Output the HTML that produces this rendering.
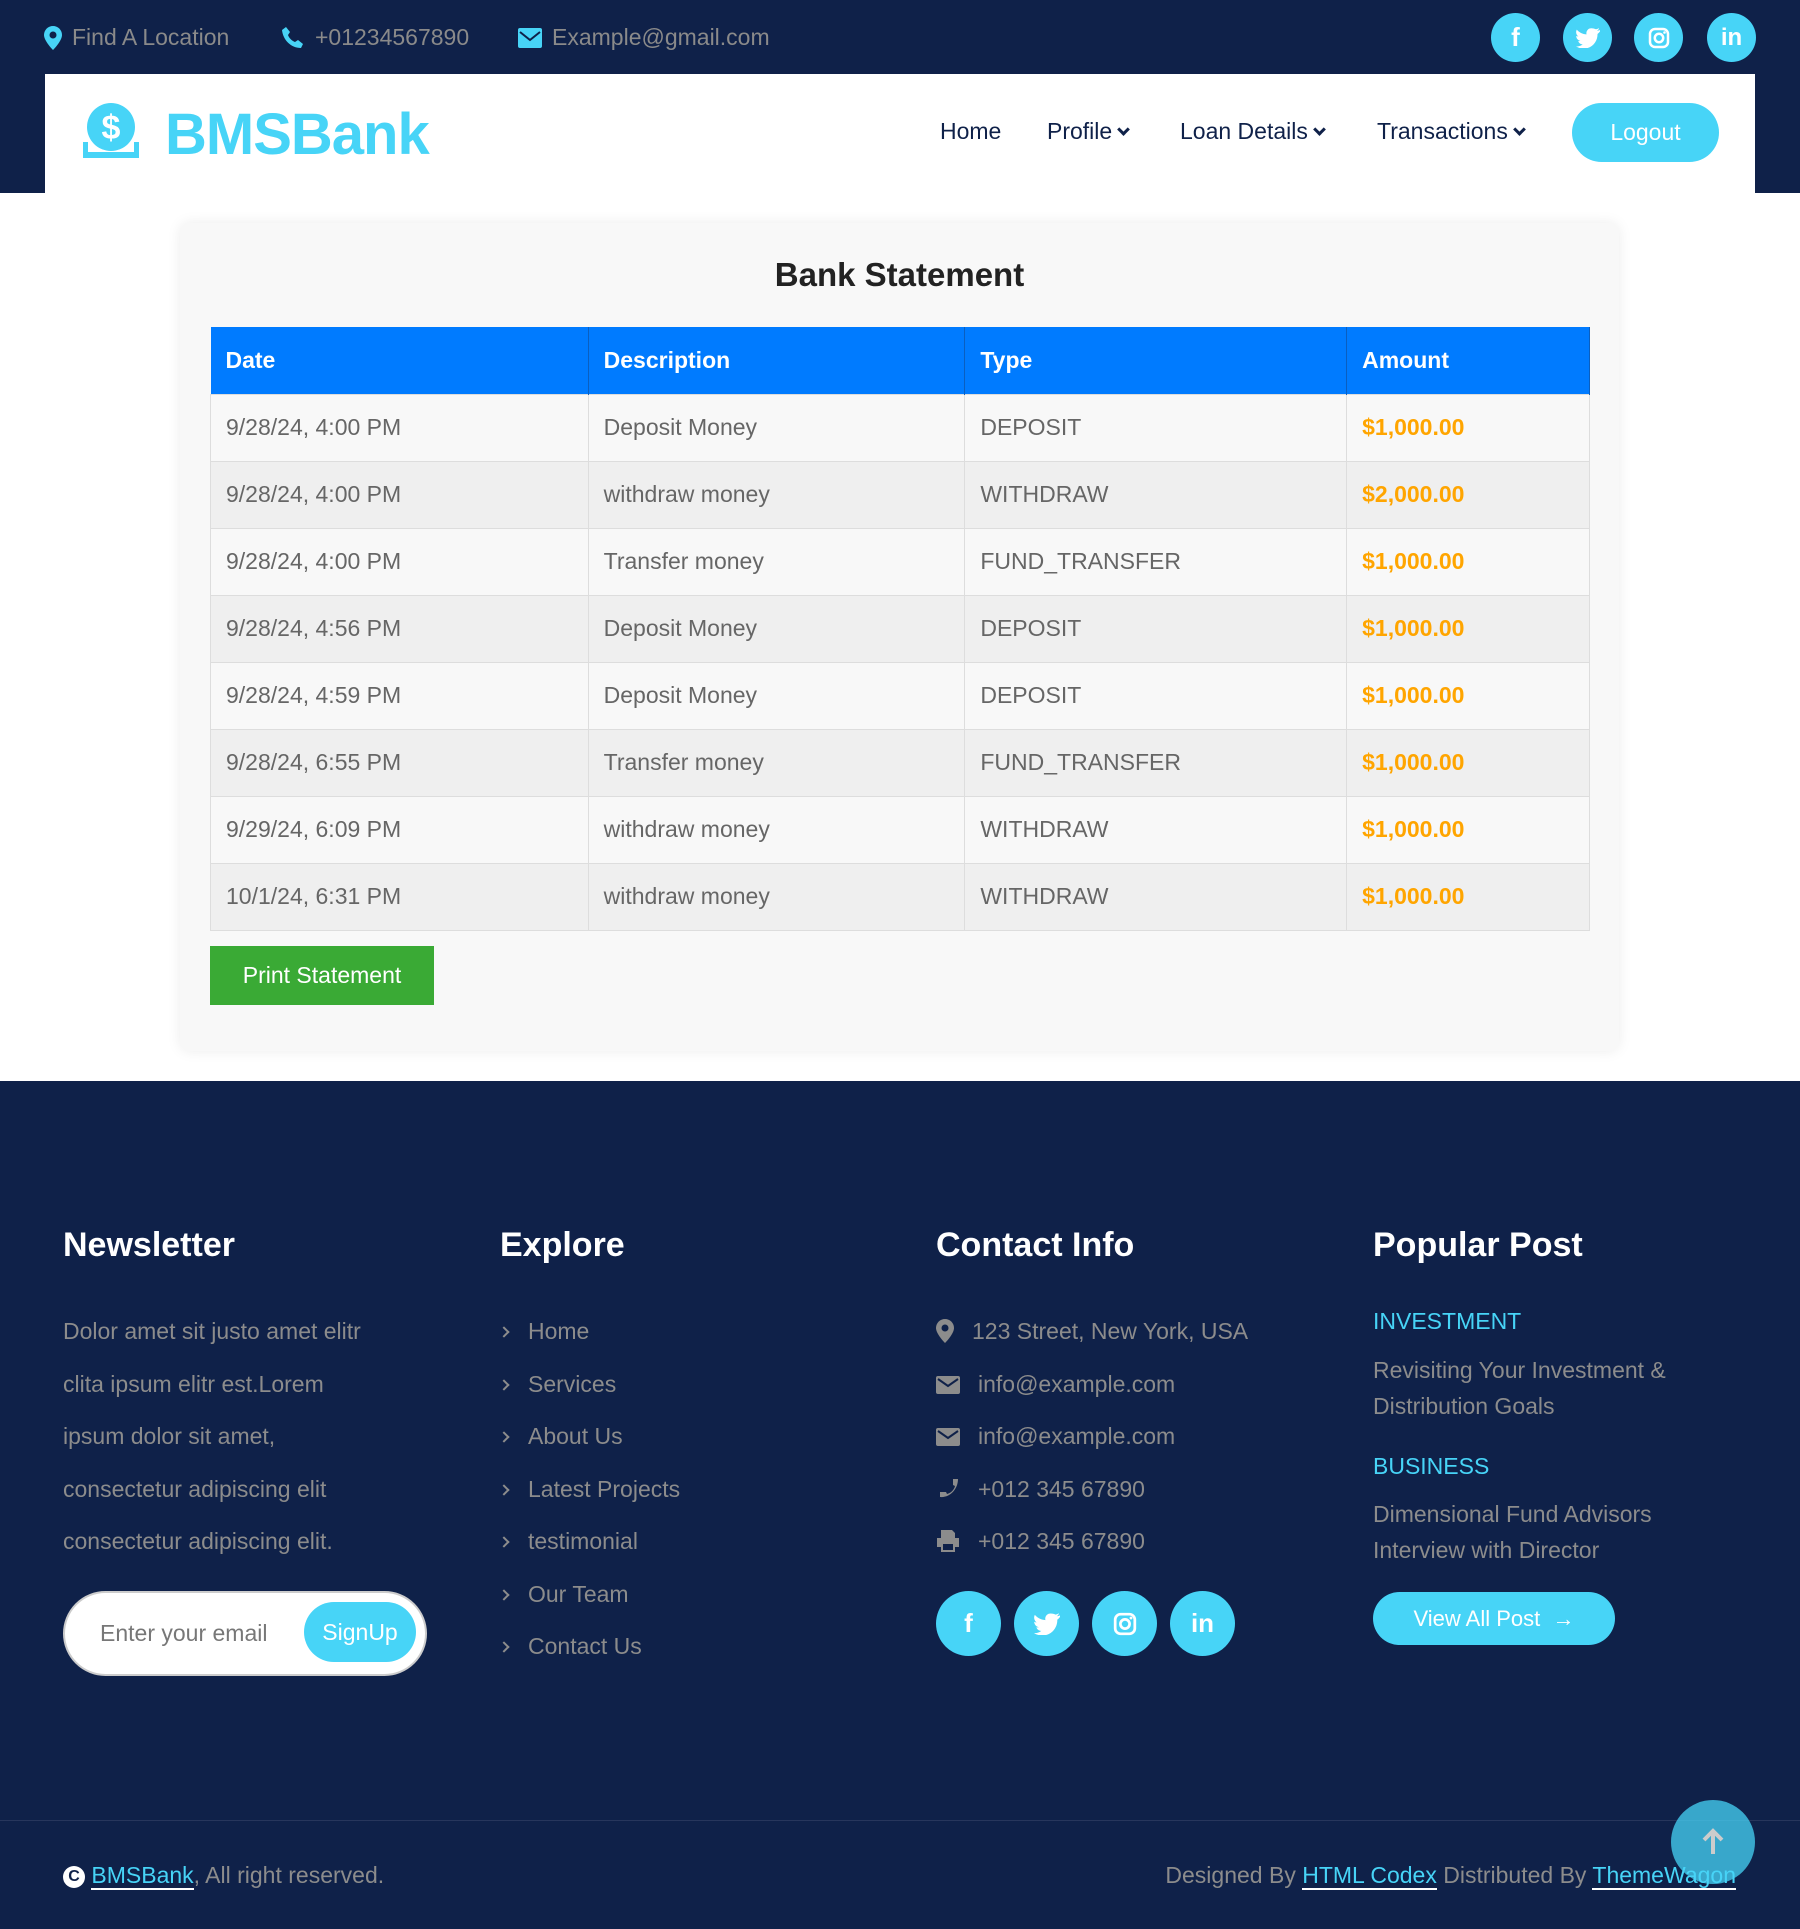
<!DOCTYPE html>
<html><head><meta charset="utf-8">
<style>
*{margin:0;padding:0;box-sizing:border-box}
body{width:1800px;height:1929px;position:relative;font-family:"Liberation Sans",sans-serif;background:#fff;overflow:hidden}
.a{position:absolute}
.navy{background:#0f2149}
.top{color:#8a8a8a;font-size:23px;top:24px;display:flex;align-items:center;gap:10px}
.soc{width:49px;height:49px;border-radius:50%;background:#47d4f7;display:flex;align-items:center;justify-content:center;color:#fff;font-weight:bold}
.nav{font-size:23px;color:#0f2149;top:118px}
.chev{display:inline-block;width:9px;height:9px;border-right:3px solid #0f2149;border-bottom:3px solid #0f2149;transform:rotate(45deg);margin-left:7px;position:relative;top:-5px}
table{border-collapse:collapse;width:1380px;font-size:23px}
th{background:#007bff;color:#fff;text-align:left;height:67px;padding-left:15px;font-weight:bold;border-right:1px solid #0a5fc0}
td{height:67px;padding-left:15px;color:#666;border:1px solid #ddd}
tr:nth-child(odd) td{background:#efefef}
tr:nth-child(even) td{background:#f8f8f8}
td.amt{color:#ffa500;font-weight:bold}
.fh{color:#fff;font-size:34px;font-weight:bold;top:1226px}
.ft{color:#8c8c8c;font-size:23px;position:absolute;white-space:nowrap}
.chr{display:inline-block;width:8px;height:8px;border-right:2.5px solid #8c8c8c;border-top:2.5px solid #8c8c8c;transform:rotate(45deg);margin-right:20px;position:relative;top:-3px}
.fs{width:65px;height:65px;border-radius:50%;background:#47d4f7;top:1591px;display:flex;align-items:center;justify-content:center;color:#fff;font-weight:bold;font-size:26px}
.cy{color:#47d4f7}
</style></head><body>
<div class="a navy" style="left:0;top:0;width:1800px;height:193px"></div>
<div class="a top" style="left:44px"><svg width="18" height="24" viewBox="0 0 18 24"><path d="M9 0C4 0 0 4 0 9c0 6 9 15 9 15s9-9 9-15C18 4 14 0 9 0z" fill="#47d4f7"/><circle cx="9" cy="9" r="3.5" fill="#0f2149"/></svg><span>Find A Location</span></div>
<div class="a top" style="left:281px"><svg width="24" height="24" viewBox="0 0 24 24"><path d="M5 1l4 5-2 3c1 3 4 6 7 7l3-2 5 4-2 4C10 22 2 14 1 4z" fill="#47d4f7"/></svg><span>+01234567890</span></div>
<div class="a top" style="left:518px"><svg width="24" height="20" viewBox="0 0 24 20"><rect width="24" height="20" rx="2" fill="#47d4f7"/><path d="M2 4l10 8 10-8" stroke="#0f2149" stroke-width="2" fill="none"/></svg><span>Example@gmail.com</span></div>
<div class="a soc" style="left:1491px;top:13px;font-size:26px">f</div>
<div class="a soc" style="left:1563px;top:13px"><svg width="24" height="20" viewBox="0 0 24 20"><path d="M24 2c-1 .5-2 .7-3 .8 1-.6 2-1.6 2-2.7-1 .6-2 1-3 1.2C17 .2 14-.3 12 1.5 10.5 3 10 5 10.6 6.4 6.6 6.2 3 4.3.8 1.6-.6 4 .3 7 2.4 8.5c-.8 0-1.5-.3-2.2-.6 0 2.5 1.8 4.6 4.2 5-.7.3-1.5.3-2.2.1.6 2 2.5 3.4 4.6 3.4C4.7 18 2.4 18.7 0 18.4 2.2 19.8 4.8 20.6 7.5 20.6c9 0 14-7.5 14-14v-.6c1-.7 1.8-1.6 2.5-2.6z" fill="#fff"/></svg></div>
<div class="a soc" style="left:1634px;top:13px"><svg width="22" height="22" viewBox="0 0 22 22"><rect x="2" y="2" width="18" height="18" rx="5" stroke="#fff" stroke-width="2.5" fill="none"/><circle cx="11" cy="11" r="4.2" stroke="#fff" stroke-width="2.5" fill="none"/><circle cx="16.5" cy="5.5" r="1.3" fill="#fff"/></svg></div>
<div class="a soc" style="left:1707px;top:13px;font-size:24px">in</div>

<div class="a" style="left:45px;top:74px;width:1710px;height:120px;background:#fff"></div>
<svg class="a" style="left:81px;top:102px" width="60" height="60" viewBox="0 0 60 60"><circle cx="30" cy="25" r="24" fill="#47d4f7"/><text x="30" y="37" text-anchor="middle" font-family="Liberation Sans" font-weight="bold" font-size="34" fill="#fff">$</text><path d="M2 40v16h56V40h-5v10H7V40z" fill="#47d4f7"/></svg>
<div class="a" style="left:165px;top:101px;font-size:58px;font-weight:bold;color:#47d4f7;letter-spacing:-1px">BMSBank</div>
<div class="a nav" style="left:940px">Home</div>
<div class="a nav" style="left:1047px">Profile<span class="chev"></span></div>
<div class="a nav" style="left:1180px">Loan Details<span class="chev"></span></div>
<div class="a nav" style="left:1377px">Transactions<span class="chev"></span></div>
<div class="a" style="left:1572px;top:103px;width:147px;height:59px;border-radius:30px;background:#47d4f7;color:#fff;font-size:23px;display:flex;align-items:center;justify-content:center">Logout</div>

<div class="a" style="left:180px;top:223px;width:1439px;height:828px;background:#f8f8f8;border-radius:10px;box-shadow:0 0 14px rgba(0,0,0,.08)"></div>
<div class="a" style="left:180px;width:1439px;top:256px;text-align:center;font-size:33px;font-weight:bold;color:#222">Bank Statement</div>
<table class="a" style="left:210px;top:327px">
<colgroup><col style="width:378px"><col style="width:377px"><col style="width:382px"><col style="width:243px"></colgroup>
<tr><th>Date</th><th>Description</th><th>Type</th><th>Amount</th></tr>
<tr><td>9/28/24, 4:00 PM</td><td>Deposit Money</td><td>DEPOSIT</td><td class="amt">$1,000.00</td></tr>
<tr><td>9/28/24, 4:00 PM</td><td>withdraw money</td><td>WITHDRAW</td><td class="amt">$2,000.00</td></tr>
<tr><td>9/28/24, 4:00 PM</td><td>Transfer money</td><td>FUND_TRANSFER</td><td class="amt">$1,000.00</td></tr>
<tr><td>9/28/24, 4:56 PM</td><td>Deposit Money</td><td>DEPOSIT</td><td class="amt">$1,000.00</td></tr>
<tr><td>9/28/24, 4:59 PM</td><td>Deposit Money</td><td>DEPOSIT</td><td class="amt">$1,000.00</td></tr>
<tr><td>9/28/24, 6:55 PM</td><td>Transfer money</td><td>FUND_TRANSFER</td><td class="amt">$1,000.00</td></tr>
<tr><td>9/29/24, 6:09 PM</td><td>withdraw money</td><td>WITHDRAW</td><td class="amt">$1,000.00</td></tr>
<tr><td>10/1/24, 6:31 PM</td><td>withdraw money</td><td>WITHDRAW</td><td class="amt">$1,000.00</td></tr>
</table>
<div class="a" style="left:210px;top:946px;width:224px;height:59px;background:#3aaa35;color:#fff;font-size:23px;display:flex;align-items:center;justify-content:center">Print Statement</div>

<div class="a navy" style="left:0;top:1081px;width:1800px;height:848px"></div>
<div class="a fh" style="left:63px">Newsletter</div>
<div class="a fh" style="left:500px">Explore</div>
<div class="a fh" style="left:936px">Contact Info</div>
<div class="a fh" style="left:1373px">Popular Post</div>

<div class="ft" style="left:63px;top:1305px;line-height:52.5px">Dolor amet sit justo amet elitr<br>clita ipsum elitr est.Lorem<br>ipsum dolor sit amet,<br>consectetur adipiscing elit<br>consectetur adipiscing elit.</div>
<div class="a" style="left:63px;top:1591px;width:364px;height:85px;border-radius:43px;background:#fff;border:2px solid #ccc"></div>
<div class="ft" style="left:100px;top:1620px;color:#777">Enter your email</div>
<div class="a" style="left:304px;top:1602px;width:112px;height:60px;border-radius:30px;background:#47d4f7;color:#fff;font-size:23px;display:flex;align-items:center;justify-content:center">SignUp</div>

<div class="ft" style="left:500px;top:1305px;line-height:52.5px"><span class="chr"></span>Home<br><span class="chr"></span>Services<br><span class="chr"></span>About Us<br><span class="chr"></span>Latest Projects<br><span class="chr"></span>testimonial<br><span class="chr"></span>Our Team<br><span class="chr"></span>Contact Us</div>

<div class="ft" style="left:936px;top:1305px;line-height:52.5px">
<div><svg width="18" height="24" viewBox="0 0 18 24" style="vertical-align:-4px;margin-right:18px"><path d="M9 0C4 0 0 4 0 9c0 6 9 15 9 15s9-9 9-15C18 4 14 0 9 0z" fill="#8c8c8c"/><circle cx="9" cy="9" r="3.5" fill="#0f2149"/></svg>123 Street, New York, USA</div>
<div><svg width="24" height="18" viewBox="0 0 24 18" style="vertical-align:-2px;margin-right:18px"><rect width="24" height="18" rx="2" fill="#8c8c8c"/><path d="M2 3l10 7 10-7" stroke="#0f2149" stroke-width="2" fill="none"/></svg>info@example.com</div>
<div><svg width="24" height="18" viewBox="0 0 24 18" style="vertical-align:-2px;margin-right:18px"><rect width="24" height="18" rx="2" fill="#8c8c8c"/><path d="M2 3l10 7 10-7" stroke="#0f2149" stroke-width="2" fill="none"/></svg>info@example.com</div>
<div><svg width="24" height="24" viewBox="0 0 24 24" style="vertical-align:-4px;margin-right:18px"><path d="M22 2l-5 0 0 6 2 1c-1 4-4 7-8 8l-1-2-6 0 0 5c10 1 18-8 18-18z" fill="#8c8c8c"/></svg>+012 345 67890</div>
<div><svg width="24" height="24" viewBox="0 0 24 24" style="vertical-align:-4px;margin-right:18px"><path d="M5 1h11l3 3v5H5z M1 9h22v9h-4v5H5v-5H1z" fill="#8c8c8c"/><rect x="7" y="15" width="10" height="6" fill="#0f2149"/></svg>+012 345 67890</div>
</div>
<div class="a fs" style="left:936px">f</div>
<div class="a fs" style="left:1014px"><svg width="26" height="22" viewBox="0 0 24 20"><path d="M24 2c-1 .5-2 .7-3 .8 1-.6 2-1.6 2-2.7-1 .6-2 1-3 1.2C17 .2 14-.3 12 1.5 10.5 3 10 5 10.6 6.4 6.6 6.2 3 4.3.8 1.6-.6 4 .3 7 2.4 8.5c-.8 0-1.5-.3-2.2-.6 0 2.5 1.8 4.6 4.2 5-.7.3-1.5.3-2.2.1.6 2 2.5 3.4 4.6 3.4C4.7 18 2.4 18.7 0 18.4 2.2 19.8 4.8 20.6 7.5 20.6c9 0 14-7.5 14-14v-.6c1-.7 1.8-1.6 2.5-2.6z" fill="#fff"/></svg></div>
<div class="a fs" style="left:1092px"><svg width="24" height="24" viewBox="0 0 22 22"><rect x="2" y="2" width="18" height="18" rx="5" stroke="#fff" stroke-width="2.5" fill="none"/><circle cx="11" cy="11" r="4.2" stroke="#fff" stroke-width="2.5" fill="none"/><circle cx="16.5" cy="5.5" r="1.3" fill="#fff"/></svg></div>
<div class="a fs" style="left:1170px">in</div>

<div class="ft cy" style="left:1373px;top:1308px">INVESTMENT</div>
<div class="ft" style="left:1373px;top:1352px;line-height:36px">Revisiting Your Investment &amp;<br>Distribution Goals</div>
<div class="ft cy" style="left:1373px;top:1453px">BUSINESS</div>
<div class="ft" style="left:1373px;top:1496px;line-height:36px">Dimensional Fund Advisors<br>Interview with Director</div>
<div class="a" style="left:1373px;top:1592px;width:242px;height:53px;border-radius:27px;background:#47d4f7;color:#fff;font-size:22px;display:flex;align-items:center;justify-content:center">View All Post&nbsp;&nbsp;<b>&#8594;</b></div>

<div class="a" style="left:0;top:1820px;width:1800px;height:1px;background:#27365c"></div>
<div class="ft" style="left:63px;top:1862px"><span style="display:inline-block;width:22px;height:22px;border-radius:50%;background:#fff;color:#0f2149;font-size:16px;font-weight:bold;text-align:center;line-height:22px;vertical-align:2px">C</span> <span class="cy" style="border-bottom:2px solid #fff">BMSBank</span>, All right reserved.</div>
<div class="ft" style="right:64px;top:1862px">Designed By <span class="cy" style="border-bottom:2px solid #fff">HTML Codex</span> Distributed By <span class="cy" style="border-bottom:2px solid #fff">ThemeWagon</span></div>
<div class="a" style="left:1671px;top:1800px;width:84px;height:84px;border-radius:50%;background:rgba(71,212,247,.75);display:flex;align-items:center;justify-content:center"><svg width="24" height="28" viewBox="0 0 24 28"><path d="M12 26V4M3 12l9-9 9 9" stroke="#ccc" stroke-width="4" fill="none"/></svg></div>
</body></html>
